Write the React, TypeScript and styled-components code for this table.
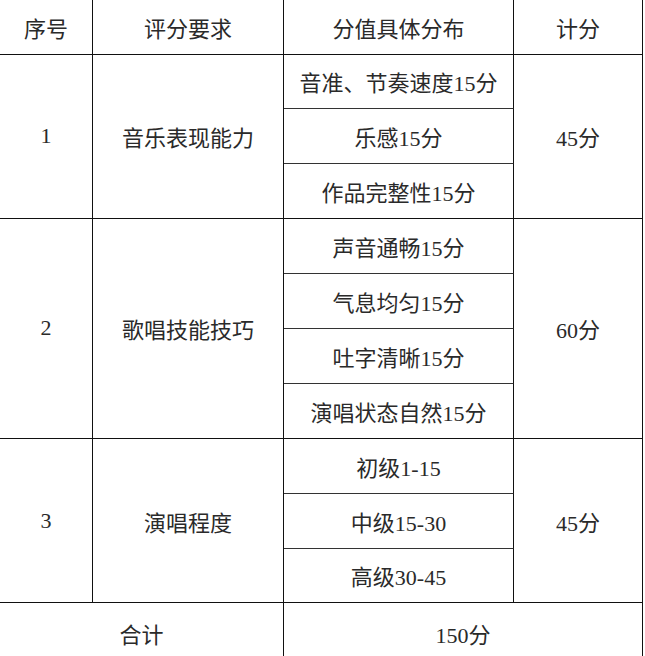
import React from "react";
import styled, { createGlobalStyle } from "styled-components";

const GlobalStyle = createGlobalStyle`
    html, body {
        margin: 0;
        padding: 0;
        background: #ffffff;
    }
    body {
        font-family: "Liberation Serif", "Noto Sans CJK SC", serif;
    }
`;

const Grid = styled.div`
    display: grid;
    width: 643px;
    grid-template-columns: 93px 191px 230px 129px;
    grid-template-rows: 54.5px repeat(10, 54.9px) 60px;
    color: #2a2a2a;
    font-size: 22px;
`;

const Cell = styled.div<{ rows?: number; cols?: number; inner?: boolean }>`
    box-sizing: border-box;
    display: flex;
    align-items: center;
    justify-content: center;
    grid-row: span ${(p) => p.rows || 1};
    grid-column: span ${(p) => p.cols || 1};
    border-right: 1.5px solid #111;
    border-bottom: 1.5px solid ${(p) => (p.inner ? "#333" : "#111")};
    white-space: nowrap;
`;

type Group = {
    no: string;
    title: string;
    items: string[];
    score: string;
};

const groups: Group[] = [
    {
        no: "1",
        title: "音乐表现能力",
        items: ["音准、节奏速度15分", "乐感15分", "作品完整性15分"],
        score: "45分",
    },
    {
        no: "2",
        title: "歌唱技能技巧",
        items: ["声音通畅15分", "气息均匀15分", "吐字清晰15分", "演唱状态自然15分"],
        score: "60分",
    },
    {
        no: "3",
        title: "演唱程度",
        items: ["初级1-15", "中级15-30", "高级30-45"],
        score: "45分",
    },
];

function GroupRows({ group }: { group: Group }) {
    const n = group.items.length;
    return (
        <>
            <Cell rows={n}>{group.no}</Cell>
            <Cell rows={n}>{group.title}</Cell>
            <Cell inner={n > 1}>{group.items[0]}</Cell>
            <Cell rows={n}>{group.score}</Cell>
            {group.items.slice(1).map((item, i) => (
                <Cell key={item} inner={i < n - 2}>
                    {item}
                </Cell>
            ))}
        </>
    );
}

export default function App() {
    return (
        <>
            <GlobalStyle />
            <Grid>
                <Cell>序号</Cell>
                <Cell>评分要求</Cell>
                <Cell>分值具体分布</Cell>
                <Cell>计分</Cell>
                {groups.map((g) => (
                    <GroupRows key={g.no} group={g} />
                ))}
                <Cell cols={2}>合计</Cell>
                <Cell cols={2}>150分</Cell>
            </Grid>
        </>
    );
}
